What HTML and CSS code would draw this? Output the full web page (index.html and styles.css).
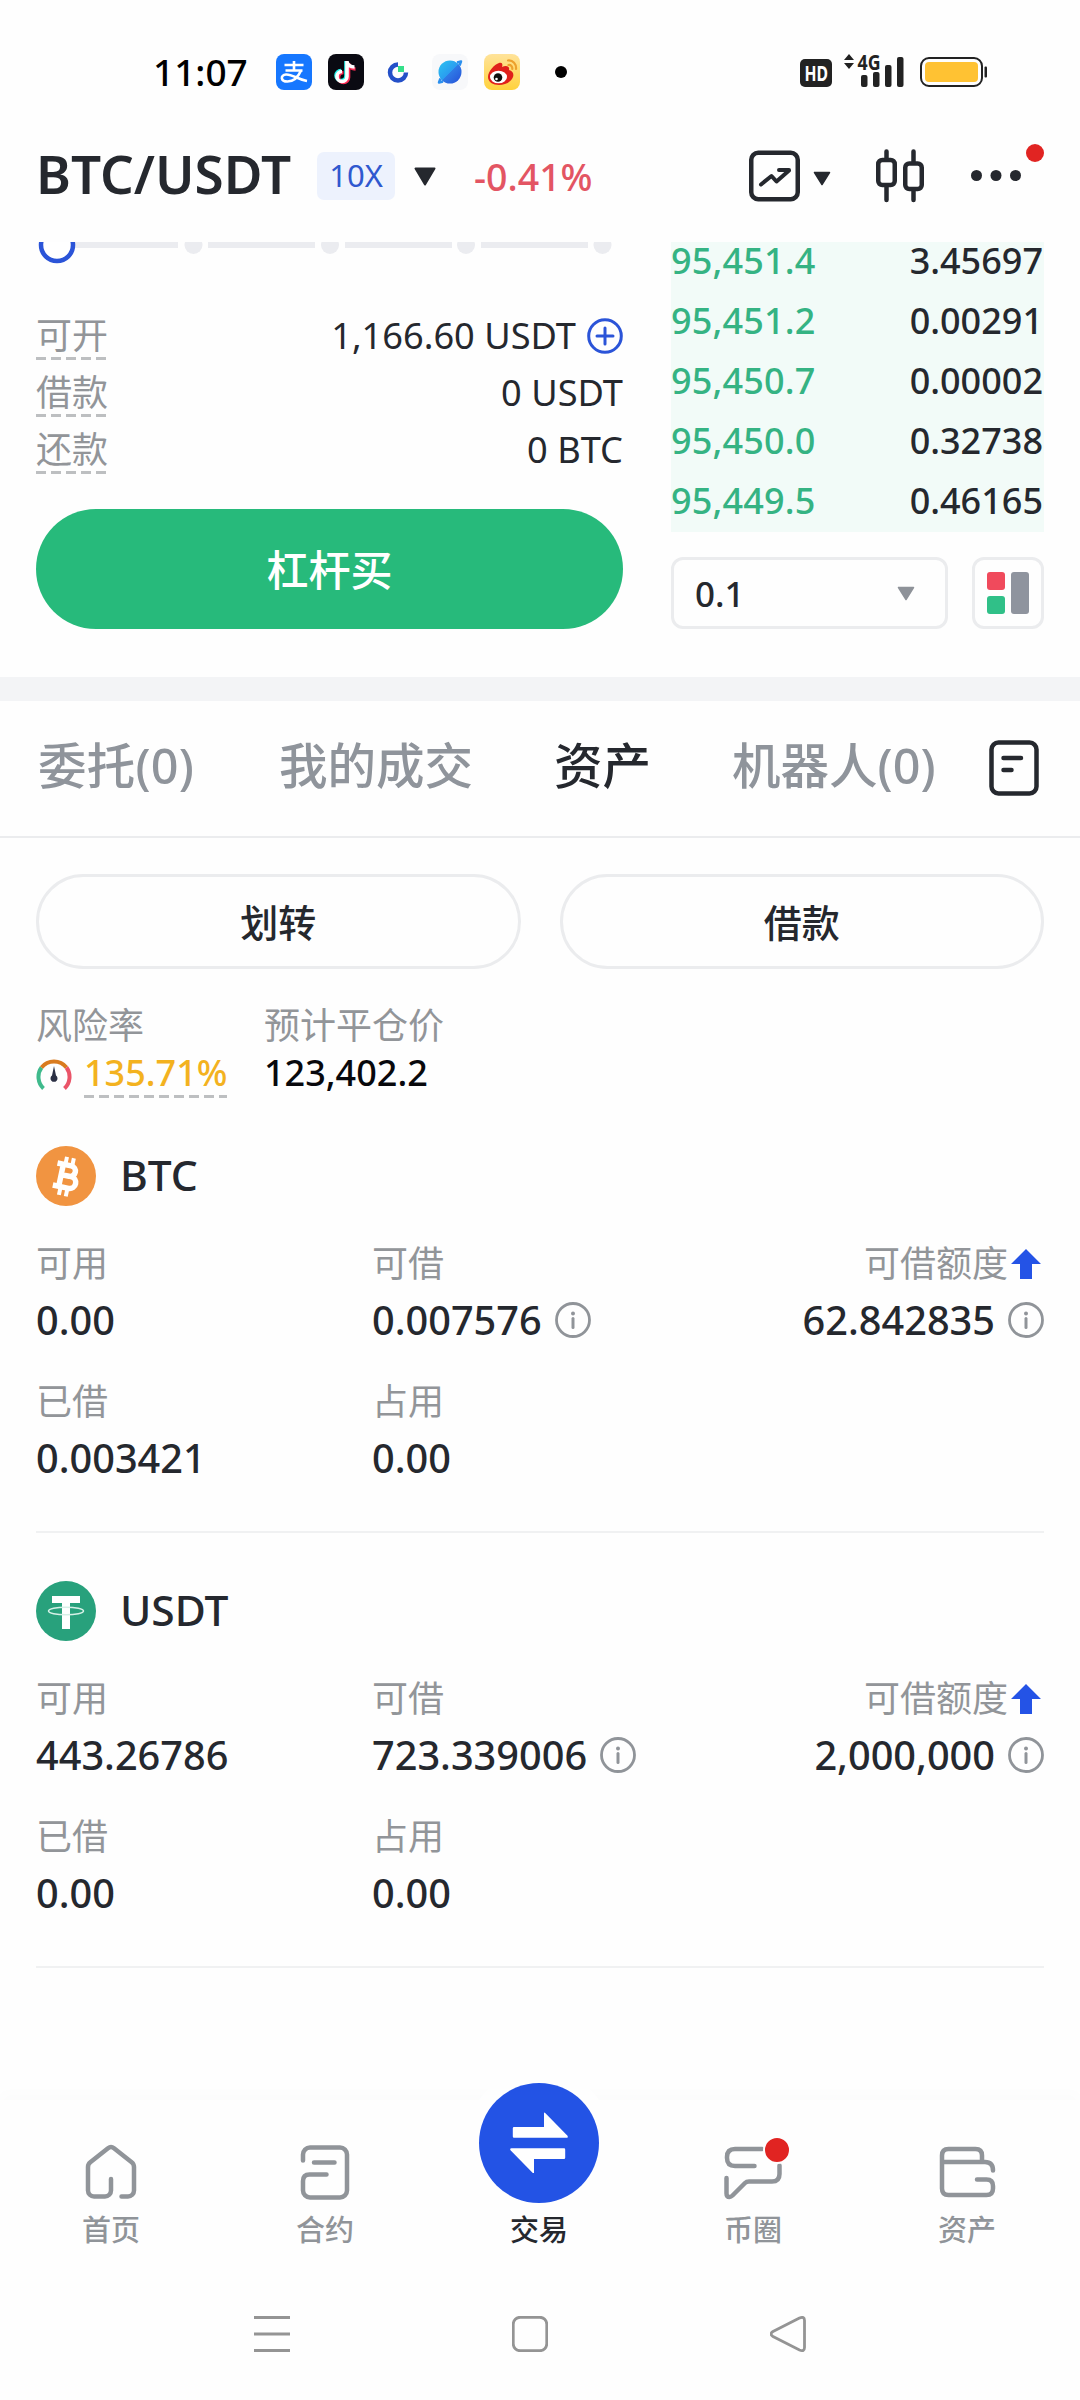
FILE: index.html
```html
<!DOCTYPE html>
<html lang="zh-CN">
<head>
<meta charset="utf-8">
<title>BTC/USDT</title>
<link rel="stylesheet" href="styles.css">
</head>
<body>
<header class="status">
  <div class="status-left">
    <span class="clock">11:07</span>
    <svg class="app" viewBox="0 0 36 36"><rect width="36" height="36" rx="8" fill="#1677ff"/><g fill="none" stroke="#fff" stroke-width="2.6"><path d="M18 7v9M8.500 11h19M9.500 16.500h17"/><path d="M25 16.500c-3 7-8 11-13.500 11-7 0-7.500-6.500-1.500-7 6-.5 12 5 21 6.500"/></g></svg>
    <svg class="app" viewBox="0 0 36 36"><rect width="36" height="36" rx="8" fill="#0a0a12"/><g fill="none" stroke-width="3.600"><path d="M19 8v14.500a5 5 0 1 1-5-5M19 9c1 3 4 5 7 5" stroke="#25f4ee" transform="translate(-1 -1)"/><path d="M19 8v14.500a5 5 0 1 1-5-5M19 9c1 3 4 5 7 5" stroke="#fe2c55" transform="translate(1.500 1)"/><path d="M19 7v15.500a5 5 0 1 1-5-5M19 8c1 3 4 5 7.500 5" stroke="#fff"/></g></svg>
    <svg class="app" viewBox="0 0 36 36"><path d="M18 10.500a8 8 0 1 0 8 8" fill="none" stroke="#2450c8" stroke-width="4.500"/><rect x="18" y="12" width="6" height="6" fill="#35e08a"/></svg>
    <svg class="app" viewBox="0 0 36 36"><defs><linearGradient id="planet" x1="0" x2="1" y1="0" y2="1"><stop offset=".2" stop-color="#2bb5f0"/><stop offset=".5" stop-color="#2a9df0"/><stop offset=".52" stop-color="#2f7ae6"/><stop offset="1" stop-color="#2450d8"/></linearGradient></defs><rect width="36" height="36" rx="8" fill="#f7f8fa"/><circle cx="18" cy="18" r="11.500" fill="url(#planet)"/><path d="M8.500 24.500L7 28.500l4-1M27.500 11.500L29 7.500l-4 1" fill="none" stroke="#2a8fee" stroke-width="2.500" stroke-linejoin="round"/></svg>
    <svg class="app" viewBox="0 0 36 36"><defs><linearGradient id="amber" x1="0" x2="0" y1="0" y2="1"><stop offset="0" stop-color="#ffe39a"/><stop offset="1" stop-color="#ffd23c"/></linearGradient></defs><rect width="36" height="36" rx="8" fill="url(#amber)"/><path d="M4 23c0-6 7-13 11-14 3-1 4 1 3 4 4-2 8-1 7 3 4 1 5 4 4 7-2 5-8 8-14 8S4 28 4 23z" fill="#e0201b"/><ellipse cx="14.500" cy="23" rx="8.500" ry="6.300" fill="#fff"/><circle cx="14" cy="23.500" r="4.300" fill="#111"/><circle cx="12.500" cy="25" r="1.300" fill="#fff"/><path d="M24 6.500c5-.5 8.500 3.500 8 8.500M24.500 11c2.500-.3 4 1.500 3.800 4" fill="none" stroke="#eda12d" stroke-width="2.200" stroke-linecap="round"/></svg>
    <i class="more-dot"></i>
  </div>
  <div class="status-right">
    <svg class="hd" viewBox="0 0 32 28"><rect width="32" height="28" rx="5" fill="#222"/><text x="4.500" y="22" textLength="23.500" lengthAdjust="spacingAndGlyphs">HD</text></svg>
    <svg class="signal" viewBox="0 0 62 34"><path d="M7 1l5 6H2zM7 16l-5-6h10z" fill="#222"/><text x="15.500" y="17" class="net" textLength="23" lengthAdjust="spacingAndGlyphs">4G</text><g fill="#222"><rect x="19" y="22" width="6.500" height="12" rx="2"/><rect x="31" y="19" width="6.500" height="15" rx="2"/><rect x="43" y="12" width="6.500" height="22" rx="2"/><rect x="55" y="4" width="6.500" height="30" rx="2"/></g></svg>
    <svg class="battery" viewBox="0 0 68 30"><rect x="1" y="1" width="61" height="28" rx="8" fill="none" stroke="#222" stroke-width="2"/><rect x="5" y="5" width="53" height="20" rx="4" fill="#ffc233"/><rect x="64.500" y="9.500" width="2.500" height="11" rx="1" fill="#222"/></svg>
  </div>
</header>

<section class="pair">
  <h1 class="symbol">BTC/USDT</h1>
  <span class="lever">10X</span>
  <svg class="caret-lg" viewBox="0 0 22 19"><path d="M1.500 1.500h19L11 17.500z" fill="#25282e" stroke="#25282e" stroke-width="2" stroke-linejoin="round"/></svg>
  <span class="change">-0.41%</span>
  <div class="tools">
    <svg class="tool-chart" viewBox="0 0 51 52"><g fill="none" stroke="#25282e" stroke-width="4.500" stroke-linecap="round" stroke-linejoin="round"><rect x="2.250" y="2.750" width="46.500" height="46.500" rx="7"/><path d="M12 34.500l10.500-8.500 5 5.500L40 20.500M30 20h10" stroke-width="4"/></g></svg>
    <svg class="caret-sm" viewBox="0 0 18 15"><path d="M1.500 1.500h15L9 13.500z" fill="#25282e" stroke="#25282e" stroke-width="1.500" stroke-linejoin="round"/></svg>
    <svg class="tool-candle" viewBox="0 0 48 54"><g fill="none" stroke="#25282e" stroke-width="4.500" stroke-linecap="round"><rect x="2.250" y="11" width="16.500" height="25" rx="4"/><rect x="29.250" y="14.500" width="16.500" height="25.500" rx="4"/><path d="M10.500 2.500v7M10.500 38v13M37.500 2.500V13M37.500 42v9"/></g></svg>
    <svg class="tool-more" viewBox="0 0 76 64"><g fill="#25282e"><circle cx="8.500" cy="35.500" r="5.500"/><circle cx="28" cy="35.500" r="5.500"/><circle cx="47.500" cy="35.500" r="5.500"/></g><circle cx="67" cy="13" r="9" fill="#e12422"/></svg>
  </div>
</section>

<main>
  <section class="trade">
    <div class="order">
      <svg class="slider" viewBox="0 0 587 24"><g fill="#ebecf0"><rect x="38" width="104" height="6"/><rect x="172" width="107" height="6"/><rect x="309" width="107" height="6"/><rect x="445" width="107" height="6"/><circle cx="157.500" cy="3" r="9"/><circle cx="294" cy="3" r="9"/><circle cx="430" cy="3" r="9"/><circle cx="566.500" cy="3" r="9"/></g><circle cx="21" cy="3" r="16" fill="#fff" stroke="#2b54d8" stroke-width="4.500"/></svg>
      <div class="line"><span class="label dashed">可开</span><span class="amount">1,166.60 USDT<svg class="plus" viewBox="0 0 36 36"><circle cx="18" cy="18" r="16.300" fill="none" stroke="#2b54d8" stroke-width="3"/><path d="M18 10v16M10 18h16" stroke="#2b54d8" stroke-width="3" stroke-linecap="round"/></svg></span></div>
      <div class="line"><span class="label dashed">借款</span><span class="amount">0 USDT</span></div>
      <div class="line"><span class="label dashed">还款</span><span class="amount">0 BTC</span></div>
      <button class="buy">杠杆买</button>
    </div>
    <div class="book">
      <div class="bids">
        <div class="bid"><span class="price">95,451.4</span><span>3.45697</span></div>
        <div class="bid"><span class="price">95,451.2</span><span>0.00291</span></div>
        <div class="bid"><span class="price">95,450.7</span><span>0.00002</span></div>
        <div class="bid"><span class="price">95,450.0</span><span>0.32738</span></div>
        <div class="bid"><span class="price">95,449.5</span><span>0.46165</span></div>
      </div>
      <div class="book-tools">
        <div class="step"><span>0.1</span><svg class="caret-sm" viewBox="0 0 18 15"><path d="M1.500 1.500h15L9 13.500z" fill="#8e9299" stroke="#8e9299" stroke-width="1.500" stroke-linejoin="round"/></svg></div>
        <div class="mode"><svg viewBox="0 0 42 42"><rect width="18" height="18" rx="3" fill="#f04a5c"/><rect y="24" width="18" height="18" rx="3" fill="#30c088"/><rect x="24" width="18" height="42" rx="3" fill="#8f949e"/></svg></div>
      </div>
    </div>
  </section>

  <nav class="tabs">
    <span class="tab">委托(0)</span><span class="tab">我的成交</span><span class="tab active">资产</span><span class="tab">机器人(0)</span>
    <svg class="tab-icon" viewBox="0 0 50 56"><g fill="none" stroke="#25282e" stroke-width="4.500" stroke-linecap="round"><rect x="2.500" y="2.500" width="45" height="51" rx="7"/><path d="M14.500 18H32M14.500 30h8"/></g></svg>
  </nav>

  <section class="assets">
    <div class="actions"><button class="action">划转</button><button class="action">借款</button></div>
    <div class="risk">
      <div class="risk-col">
        <span class="label">风险率</span>
        <div class="risk-value"><svg class="gauge" viewBox="0 0 36 32"><g fill="none" stroke-width="4"><path d="M7.500 29.500A16 16 0 0 1 5.500 8.500" stroke="#3fba8c"/><path d="M5.500 8.500a16 16 0 0 1 25 0" stroke="#d97b1e"/><path d="M30.500 8.500a16 16 0 0 1-2 21" stroke="#ea5468"/></g><path d="M18 7l2 9.500a3.500 3.500 0 1 1-4 0z" fill="#2b3044"/></svg><span class="ratio dashed">135.71%</span></div>
      </div>
      <div class="risk-col"><span class="label">预计平仓价</span><span class="liq">123,402.2</span></div>
    </div>

    <article class="coin">
      <div class="coin-head"><svg class="logo" viewBox="0 0 60 60"><circle cx="30" cy="30" r="30" fill="#f19441"/><g transform="rotate(12 30 30)" fill="none" stroke="#fff"><path d="M19 19h14a5.300 5.300 0 0 1 0 10.600H25M25 29.600h10a6 6 0 0 1 0 12H19M25 19v22" stroke-width="5.500"/><path d="M27 11v7M34 11v7M27 42v8M34 42v8" stroke-width="4"/></g></svg><span>BTC</span></div>
      <div class="stats">
        <div class="stat"><span class="label">可用</span><span class="num">0.00</span></div>
        <div class="stat"><span class="label">可借</span><span class="num">0.007576<svg class="info" viewBox="0 0 36 36"><circle cx="18" cy="18" r="16.500" fill="none" stroke="#909499" stroke-width="2.800"/><circle cx="18" cy="11.500" r="2" fill="#909499"/><path d="M18 16.500v9" stroke="#909499" stroke-width="3" stroke-linecap="round"/></svg></span></div>
        <div class="stat end"><span class="label">可借额度<svg class="up" viewBox="0 0 30 30"><path d="M15 0l15 15h-9v15H9V15H0z" fill="#2453e6"/></svg></span><span class="num">62.842835<svg class="info" viewBox="0 0 36 36"><circle cx="18" cy="18" r="16.500" fill="none" stroke="#909499" stroke-width="2.800"/><circle cx="18" cy="11.500" r="2" fill="#909499"/><path d="M18 16.500v9" stroke="#909499" stroke-width="3" stroke-linecap="round"/></svg></span></div>
        <div class="stat"><span class="label">已借</span><span class="num">0.003421</span></div>
        <div class="stat"><span class="label">占用</span><span class="num">0.00</span></div>
      </div>
    </article>

    <article class="coin">
      <div class="coin-head"><svg class="logo" viewBox="0 0 60 60"><circle cx="30" cy="30" r="30" fill="#28a17c"/><path d="M16 15h28v7H34v26h-8V22H16z" fill="#fff"/><ellipse cx="30" cy="30" rx="17.500" ry="3.800" fill="none" stroke="#d5f0e6" stroke-width="1.500"/></svg><span>USDT</span></div>
      <div class="stats">
        <div class="stat"><span class="label">可用</span><span class="num">443.26786</span></div>
        <div class="stat"><span class="label">可借</span><span class="num">723.339006<svg class="info" viewBox="0 0 36 36"><circle cx="18" cy="18" r="16.500" fill="none" stroke="#909499" stroke-width="2.800"/><circle cx="18" cy="11.500" r="2" fill="#909499"/><path d="M18 16.500v9" stroke="#909499" stroke-width="3" stroke-linecap="round"/></svg></span></div>
        <div class="stat end"><span class="label">可借额度<svg class="up" viewBox="0 0 30 30"><path d="M15 0l15 15h-9v15H9V15H0z" fill="#2453e6"/></svg></span><span class="num">2,000,000<svg class="info" viewBox="0 0 36 36"><circle cx="18" cy="18" r="16.500" fill="none" stroke="#909499" stroke-width="2.800"/><circle cx="18" cy="11.500" r="2" fill="#909499"/><path d="M18 16.500v9" stroke="#909499" stroke-width="3" stroke-linecap="round"/></svg></span></div>
        <div class="stat"><span class="label">已借</span><span class="num">0.00</span></div>
        <div class="stat"><span class="label">占用</span><span class="num">0.00</span></div>
      </div>
    </article>
  </section>
</main>

<nav class="bottom">
  <div class="item"><svg viewBox="0 0 60 60"><path d="M40.500 54.500H47a6 6 0 0 0 6-6V25q0-3-2.300-4.800L33 6.200q-3-2.400-6 0L9.300 20.200Q7 22 7 25v23.500a6 6 0 0 0 6 6h11a6 6 0 0 0 6-6V37"/></svg><span>首页</span></div>
  <div class="item"><svg viewBox="0 0 60 60"><path d="M8 18.500v-6a7 7 0 0 1 7-7h30a7 7 0 0 1 7 7v36a7 7 0 0 1-7 7H15a7 7 0 0 1-7-7V39q0-6.500 6.500-6.500h17M19 20.500h20.500"/></svg><span>合约</span></div>
  <div class="item current"><div class="swap"><svg viewBox="0 0 62 62"><path id="arrow" d="M6 16h30V2.500q0-1.500 1.200-.5L59.500 24.700q1 2-1 2H6q-1.200 0-1.200-1.200v-8.300Q4.800 16 6 16z" fill="#fff"/><use href="#arrow" transform="rotate(180 31 32)"/></svg></div><span>交易</span></div>
  <div class="item"><svg viewBox="0 0 60 60"><path d="M39 7H12q-8 0-8 8v1q0 8 8 8h19.500M3.500 36v15.500q0 3.500 3 3.500 1.500 0 3-1.500L22 41q1.500-1.500 4-1.500h23q7.500 0 7.500-7.500v-8.500"/></svg><i class="badge"></i><span>币圈</span></div>
  <div class="item"><svg viewBox="0 0 60 60"><path d="M5 21V13.500q0-6.500 6.500-6.500h27q6.500 0 6.500 6.500V20M5 20v26.500Q5 53 11.500 53h38q6.500 0 6.500-6.500V44q0-6.500-6.500-6.500H40M5 20h43q8 0 8 8.500"/></svg><span>资产</span></div>
</nav>

<footer class="system">
  <svg viewBox="0 0 36 36"><path d="M0 1.500h36M0 18h36M0 34.500h36"/></svg>
  <svg viewBox="0 0 36 36"><rect x="1.250" y="1.250" width="33.500" height="33.500" rx="7"/></svg>
  <svg viewBox="0 0 36 36"><path d="M29.500 2L3 15.500q-4 2.500 0 5L29.500 34q5 2 5-2.500v-27q0-4.500-5-2.500z"/></svg>
</footer>
</body>
</html>
```
FILE: styles.css
```css
* { box-sizing: border-box; margin: 0; padding: 0; }
body { width: 1080px; height: 2400px; overflow: hidden; background: #fefefe; color: #25282e; font-family: "Noto Sans", "Noto Sans CJK SC", sans-serif; font-size: 36px; display: flex; flex-direction: column; }
svg { display: block; flex: none; }
button { font: inherit; color: inherit; border: 0; background: none; }
span { white-space: nowrap; }

.status { height: 110px; padding: 34px 92px 0 153px; display: flex; justify-content: space-between; align-items: flex-start; }
.status-left, .status-right { display: flex; align-items: center; height: 76px; }
.status-left { gap: 16px; }
.clock { width: 107px; font-size: 37px; font-weight: 500; color: #000; line-height: 76px; }
.app { width: 36px; height: 36px; }
.more-dot { width: 12px; height: 12px; border-radius: 50%; background: #000; margin-left: 19px; }
.hd { width: 32px; height: 28px; margin-top: 2px; overflow: visible; font: 700 22px "Noto Sans", sans-serif; fill: #fff; }
.signal { width: 62px; height: 34px; margin: -4px 16px 0 10px; overflow: visible; }
.net { font: 700 22px "Noto Sans", sans-serif; fill: #222; }
.battery { width: 68px; height: 30px; }

.pair { height: 132px; padding: 0 4px 0 36px; display: flex; align-items: center; flex: none; }
.symbol { width: 281px; font-size: 53px; font-weight: 600; line-height: 110px; margin-top: -4px; white-space: nowrap; }
.lever { width: 78px; height: 48px; border-radius: 7px; background: #edf2fd; color: #2f58cf; font-size: 31px; line-height: 47px; text-align: center; }
.caret-lg { width: 22px; height: 19px; margin-left: 19px; }
.change { margin-left: 38px; font-size: 37.5px; font-weight: 500; color: #e35563; }
.tools { margin-left: auto; display: flex; align-items: center; }
.tool-chart { width: 51px; height: 52px; }
.caret-sm { width: 18px; height: 15px; }
.tools .caret-sm { margin: 4px 0 0 13px; }
.tool-candle { width: 48px; height: 54px; margin-left: 45px; }
.tool-more { width: 76px; height: 64px; margin: -8px 32px 0 44px; }

main { height: 1858px; flex: none; }
.trade { height: 435px; padding: 0 36px; display: grid; grid-template-columns: 587px 373px; column-gap: 48px; }
.slider { width: 587px; height: 24px; margin-bottom: 41px; }
.line { height: 57px; display: flex; align-items: center; justify-content: space-between; }
.label { color: #929599; font-size: 36px; line-height: 48px; }
.dashed { background: repeating-linear-gradient(90deg, #bdbfc1 0 10px, transparent 10px 15px) left bottom / 100% 3px no-repeat; }
.amount { display: flex; align-items: center; color: #25282e; font-size: 36.200px; line-height: 47px; }
.plus { width: 36px; height: 36px; margin-left: 11px; }
.buy { display: block; width: 587px; height: 120px; margin-top: 31px; padding-top: 2px; border-radius: 60px; background: #27ba7b; color: #fff; font-size: 42px; font-weight: 500; line-height: 118px; }
.bids { height: 290px; background: #f2fbf8; font-weight: 500; padding: 0 1px 0 0; }
.bid { height: 60px; display: flex; justify-content: space-between; line-height: 60px; }
.bid:first-child { height: 49px; line-height: 38px; }
.price { color: #35b383; letter-spacing: .15px; }
.book-tools { display: flex; justify-content: space-between; margin-top: 25px; }
.step { width: 277px; height: 72px; border: 3px solid #ebecee; border-radius: 12px; padding: 0 30px 0 21px; display: flex; align-items: center; justify-content: space-between; font-weight: 500; font-size: 35px; }
.mode { width: 72px; height: 72px; border: 3px solid #ebecee; border-radius: 12px; padding: 12px; }
.mode svg { width: 42px; height: 42px; }

.tabs { height: 161px; padding: 0 41px 6px 38px; border-top: 24px solid #f3f4f6; border-bottom: 2px solid #ebecee; display: flex; align-items: center; }
.tab { font-size: 48.500px; font-weight: 500; color: #8f949b; margin-right: 81px; line-height: 70px; margin-top: -2px; }
.tab:nth-of-type(1) { margin-right: 85px; letter-spacing: .2px; }
.tab:nth-of-type(4) { margin-right: 0; }
.active { color: #25282e; }
.tab-icon { width: 50px; height: 56px; margin: 4px 0 0 auto; }

.assets { padding: 36px 36px 0; }
.actions { display: flex; gap: 39px; }
.action { flex: 1; height: 95px; border: 3px solid #ebecee; border-radius: 48px; font-size: 38px; font-weight: 500; line-height: 86px; }
.risk { display: flex; margin-top: 35px; height: 96px; margin-bottom: 46px; }
.risk-col { width: 228px; display: flex; flex-direction: column; }
.risk-col .label { line-height: 43px; height: 42px; }
.risk-value { display: flex; height: 54px; }
.gauge { width: 36px; height: 32px; margin: 13px 12px 0 0; }
.ratio { color: #f3b21f; font-weight: 500; height: 52px; line-height: 54px; }
.liq { color: #08080c; font-weight: 500; line-height: 54px; }

.coin { padding-bottom: 41px; border-bottom: 2px solid #f0f1f2; margin-bottom: 48px; }
.coin-head { height: 60px; display: flex; align-items: center; gap: 24px; font-size: 42.500px; font-weight: 500; margin-bottom: 34px; }
.coin-head span { line-height: 58px; height: 60px; }
.logo { width: 60px; height: 60px; }
.stats { display: grid; grid-template-columns: 336px 336px 336px; row-gap: 26px; }
.stat { display: flex; flex-direction: column; height: 112px; }
.num { font-size: 39.700px; font-weight: 500; line-height: 64px; display: flex; align-items: center; }
.info { width: 36px; height: 36px; margin-left: 13px; }
.end { align-items: flex-end; }
.end .label { display: flex; align-items: center; }
.up { width: 30px; height: 30px; margin: 0 3px 0 3px; }

.bottom { height: 180px; flex: none; padding: 0 4px; display: flex; box-shadow: 0 -8px 12px rgba(0,0,0,.012); }
.item { width: 214px; padding-top: 42px; display: flex; flex-direction: column; align-items: center; position: relative; font-size: 29px; font-weight: 500; color: #909499; }
.item > svg { width: 60px; height: 60px; fill: none; stroke: #909499; stroke-width: 4.500; stroke-linecap: round; stroke-linejoin: round; }
.item span { line-height: 40px; margin-top: 8px; }
.current { color: #25282e; padding-top: 0; }
.swap { width: 120px; height: 120px; margin: -17px 0 -1px; border-radius: 50%; background: #2353e5; box-shadow: 0 0 0 14px #fefefe; padding: 28px 29px; }
.swap svg { width: 62px; height: 62px; }
.badge { position: absolute; left: 117px; top: 36px; width: 28px; height: 28px; border: 2px solid #fefefe; border-radius: 50%; background: #e12422; }
.system { flex: 1; padding: 36px 274px 0 254px; display: flex; justify-content: space-between; }
.system svg { width: 36px; height: 36px; fill: none; stroke: #949494; stroke-width: 2.800; }
```
